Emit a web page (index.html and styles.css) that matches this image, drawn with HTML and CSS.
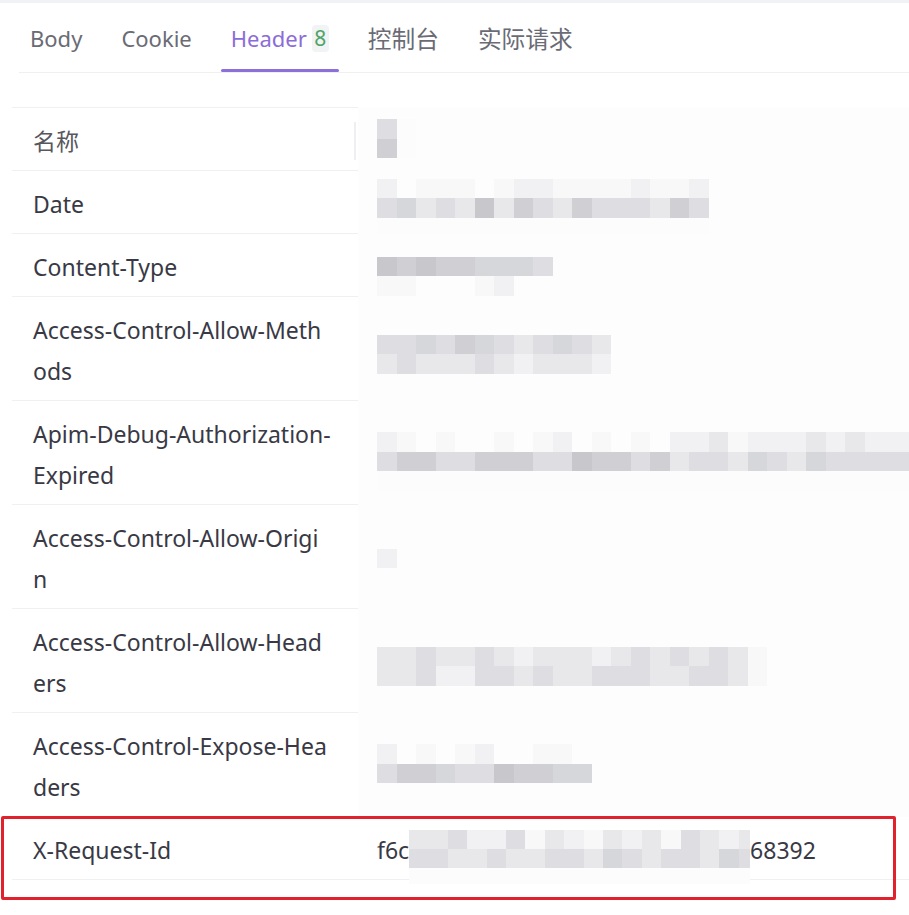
FILE: index.html
```html
<!DOCTYPE html>
<html lang="zh-CN">
<head>
<meta charset="utf-8">
<title>Header</title>
<link rel="stylesheet" href="styles.css">
</head>
<body>
<div class="topstrip"></div>
<nav class="tabs">
  <div class="tab"><span class="tab-label">Body</span><i class="bar"></i></div>
  <div class="tab"><span class="tab-label">Cookie</span><i class="bar"></i></div>
  <div class="tab active"><span class="tab-label">Header<span class="badge">8</span></span><i class="bar"></i></div>
  <div class="tab"><span class="tab-label cjk">控制台</span><i class="bar"></i></div>
  <div class="tab"><span class="tab-label cjk">实际请求</span><i class="bar"></i></div>
</nav>

<div class="htable">
  <div class="row row-head">
    <div class="cell-name"><span>名称</span><i class="divider"></i></div>
    <div class="cell-val"><div class="mosaic" data-top="12" data-m="dz|fz"></div></div>
  </div>
  <div class="row">
    <div class="cell-name">Date</div>
    <div class="cell-val"><div class="mosaic" data-top="7.5" data-m="bwaaawabbaaaabaab|decdcgcfdcfdddcfd|zzzzzzzzzzzzzzzzz"></div></div>
  </div>
  <div class="row">
    <div class="cell-name">Content-Type</div>
    <div class="cell-val"><div class="mosaic" data-top="22.5" data-m="gfgffeeed|aawwwabww"></div></div>
  </div>
  <div class="row">
    <div class="cell-name">Access-Control-Allow-Methods</div>
    <div class="cell-val"><div class="mosaic" data-top="37.5" data-m="ddedfedcdedc|cdcccdcbcccb"></div></div>
  </div>
  <div class="row">
    <div class="cell-name">Apim-Debug-Authorization-Expired</div>
    <div class="cell-val"><div class="mosaic" data-top="31" data-m="bawawwawabwawawbbcabbbcbcbbb|dffddfffddgffdfcddcedceddddd|zzzzzzzzzzzzzzzzzzzzzzzzzzzz"></div></div>
  </div>
  <div class="row">
    <div class="cell-name">Access-Control-Allow-Origin</div>
    <div class="cell-val"><div class="mosaic" data-top="43.5" data-m="b"></div></div>
  </div>
  <div class="row">
    <div class="cell-name">Access-Control-Allow-Headers</div>
    <div class="cell-val"><div class="mosaic" data-top="37.5" data-m="ccdccdcbcccbcdcdcdca|ccdbbddcdccdddccddca"></div></div>
  </div>
  <div class="row">
    <div class="cell-name">Access-Control-Expose-Headers</div>
    <div class="cell-val"><div class="mosaic" data-top="31" data-m="bwawabwwaaw|dffeddgffee"></div></div>
  </div>
  <div class="row row-last">
    <div class="cell-name">X-Request-Id</div>
    <div class="cell-val plain">
      <span class="val-text">f6c</span>
      <div class="mosaic xmosaic" data-top="0.5" data-m="ccdbbdacbacbcadcbc|ddccdccddcedcddced|zzzzzzzzzzzzzzzzzz"></div>
      <span class="val-text">68392</span>
    </div>
    <div class="redbox"></div>
  </div>
</div>
<script src="script.js"></script>
</body>
</html>
```

FILE: styles.css
```css
* { box-sizing: border-box; }

html, body {
  margin: 0;
  padding: 0;
  background: #ffffff;
}

body {
  font-family: "Noto Sans", "Noto Sans CJK SC", sans-serif;
  color: #393945;
  padding-bottom: 30px;
}

.topstrip {
  height: 3px;
  background: #f1f2f5;
}

/* ---------- tabs ---------- */
.tabs {
  display: flex;
  gap: 19px;
  margin-left: 19px;
  padding-left: 1px;
  border-bottom: 1px solid #f0f0f2;
}

.tab {
  display: flex;
  flex-direction: column;
  align-items: stretch;
  height: 69px;
}

.tab-label {
  flex: 1;
  display: flex;
  align-items: center;
  padding: 4px 10px 0;
  font-size: 22px;
  color: #6a6b74;
  white-space: nowrap;
}

.tab-label.cjk {
  font-size: 23.7px;
}

.tab .bar {
  display: block;
  height: 3px;
  border-radius: 2px;
  background: transparent;
}

.tab.active .tab-label { color: #8b6cd8; }
.tab.active .bar { background: #8d6fdc; }

.badge {
  display: inline-flex;
  align-items: center;
  justify-content: center;
  width: 17px;
  height: 27px;
  margin-left: 5px;
  border-radius: 4px;
  background: #f1f3f4;
  color: #4fa466;
  font-size: 21px;
}

/* ---------- header table ---------- */
.htable {
  margin-top: 34px;
  margin-left: 12px;
}

.row {
  position: relative;
  display: grid;
  grid-template-columns: 346px 1fr;
}

.cell-name {
  padding: 12.5px 26.5px 8.7px 21px;
  font-size: 23px;
  line-height: 40.9px;
  color: #393945;
  word-break: break-all;
  border-bottom: 1px solid #f0f0f2;
}

.row-head .cell-name {
  display: flex;
  align-items: center;
  padding-right: 2px;
  color: #57575e;
  border-top: 1px solid #f0f0f2;
}

.divider {
  margin-left: auto;
  width: 2px;
  height: 38px;
  background: #efeff1;
}

.cell-val {
  padding-left: 19px;
  background: #fdfdfd;
  overflow: hidden;
}

.cell-val.plain {
  display: flex;
  align-items: flex-start;
  padding: 12.5px 0 8.7px 19px;
  background: #ffffff;
  border-bottom: 1px solid #f0f0f2;
  overflow: visible;
}

.val-text {
  font-size: 23px;
  line-height: 40.9px;
  color: #393945;
}

/* ---------- mosaic (redacted values) ---------- */
.mosaic {
  display: flex;
  flex-direction: column;
  margin-bottom: -80px;
}

.mrow {
  display: flex;
  height: 19.5px;
}

.mrow span {
  flex: none;
  width: 19.5px;
  height: 100%;
}

.xmosaic {
  width: 341px;
  overflow: hidden;
}

.xmosaic .mrow { height: 19px; }
.xmosaic .mrow:last-child { height: 16px; }
.xmosaic .mrow span { width: 19.4px; }

.px-w { background: transparent; }
.px-z { background: #fcfcfc; }
.px-a { background: #f8f8f8; }
.px-b { background: #f1f1f3; }
.px-c { background: #e8e8eb; }
.px-d { background: #dedee2; }
.px-e { background: #d6d7db; }
.px-f { background: #cfcfd4; }
.px-g { background: #c7c7cc; }

/* ---------- annotation ---------- */
.redbox {
  position: absolute;
  left: -11px;
  top: -1px;
  width: 895px;
  height: 84px;
  border: 3px solid #e1212b;
  border-radius: 2px;
  pointer-events: none;
}
```

FILE: script.js
```js
document.querySelectorAll('.mosaic').forEach(function (m) {
  var rows = (m.dataset.m || '').split('|');
  rows.forEach(function (r) {
    var row = document.createElement('div');
    row.className = 'mrow';
    for (var i = 0; i < r.length; i++) {
      var s = document.createElement('span');
      s.className = 'px-' + r[i];
      row.appendChild(s);
    }
    m.appendChild(row);
  });
  if (m.dataset.top) {
    m.style.marginTop = m.dataset.top + 'px';
  }
});
```
